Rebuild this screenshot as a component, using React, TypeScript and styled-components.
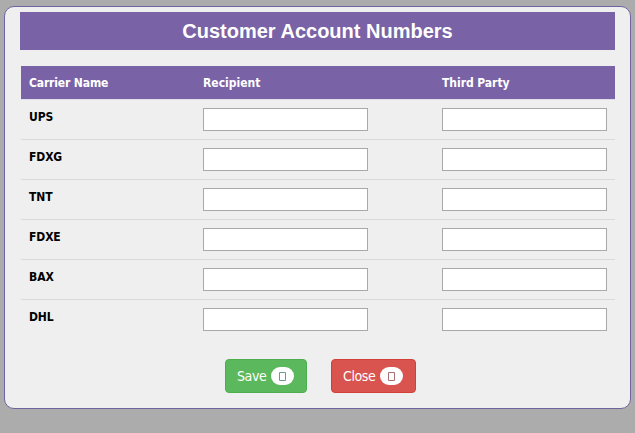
import React from 'react';
import styled, { createGlobalStyle } from 'styled-components';

const GlobalStyle = createGlobalStyle`
  *, *::before, *::after { box-sizing: border-box; }
  html, body { height: 100%; }
  body {
    margin: 0;
    background: #acacac;
    font-family: 'DejaVu Sans Condensed', 'Noto Sans', sans-serif;
    overflow: hidden;
  }
`;

const Dialog = styled.main`
  width: 627px;
  height: 403px;
  margin: 6px 0 0 4px;
  padding: 5px 15px 0;
  border: 1px solid #7064a0;
  border-radius: 10px;
  background: #efefef;
`;

const Title = styled.h1`
  height: 38px;
  margin: 0 0 16px;
  background: #7962a6;
  color: #fff;
  font: bold 20px/38px 'Liberation Sans', Arial, sans-serif;
  text-align: center;
`;

const Table = styled.div`
  margin-left: 1px;
`;

const Row = styled.div`
  display: grid;
  grid-template-columns: 174px 239px 1fr;
  height: 40px;
  padding: 8px 8px 0;
  border-bottom: 1px solid #dadada;
  &:last-child { border-bottom-color: transparent; }
`;

const HeaderRow = styled(Row)`
  height: 34px;
  border-bottom: 1px solid #e0dce9;
  background: #7962a6;
  background-clip: padding-box;
  color: #fff;
`;

const Label = styled.span<{ $spacing?: number }>`
  font: bold 12px/18px 'DejaVu Sans Condensed', 'Noto Sans', sans-serif;
  letter-spacing: ${({ $spacing = -0.1 }) => $spacing}px;
  white-space: nowrap;
`;

const CarrierName = styled(Label)`
  color: #000;
`;

const AccountInput = styled.input`
  width: 165px;
  height: 23px;
  padding: 1px 4px;
  border: 1px solid #a9a9a9;
  border-radius: 0;
  background: #fff;
  outline: none;
`;

const Actions = styled.div`
  display: flex;
  gap: 24px;
  margin: 19px 0 0 205px;
`;

const Button = styled.button<{ $tone: 'save' | 'close' }>`
  display: flex;
  align-items: center;
  justify-content: space-between;
  width: ${({ $tone }) => ($tone === 'save' ? 82 : 85)}px;
  height: 34px;
  padding: 0 12px 0 11px;
  border: 1px solid ${({ $tone }) => ($tone === 'save' ? '#4cae4c' : '#d43f3a')};
  border-radius: 4px;
  background: ${({ $tone }) => ($tone === 'save' ? '#5cb85c' : '#d9534f')};
  color: #fff;
  font: 14px/20px 'DejaVu Sans Condensed', 'Noto Sans', sans-serif;
  letter-spacing: -0.4px;
`;

const Badge = styled.span<{ $tone: 'save' | 'close' }>`
  display: flex;
  align-items: center;
  justify-content: center;
  width: 23px;
  height: 18px;
  border-radius: 9px;
  background: #fff;
  color: ${({ $tone }) => ($tone === 'save' ? '#6a9c8c' : '#a87070')};
`;

const Glyph = styled.svg`
  display: block;
  width: 7px;
  height: 9px;
  margin-top: 1px;
`;

const BoxGlyph = () => (
  <Glyph viewBox="0 0 7 9" fill="none" stroke="currentColor" aria-hidden="true">
    <path d="M.5.5h6v8h-6z" />
  </Glyph>
);

const columns = [
  { title: 'Carrier Name', spacing: -0.14 },
  { title: 'Recipient', spacing: 0 },
  { title: 'Third Party', spacing: -0.04 },
];

const carriers = ['UPS', 'FDXG', 'TNT', 'FDXE', 'BAX', 'DHL'];

export default function App() {
  return (
    <>
      <GlobalStyle />
      <Dialog>
        <Title>Customer Account Numbers</Title>
        <Table>
          <HeaderRow>
            {columns.map(({ title, spacing }) => (
              <Label key={title} $spacing={spacing}>{title}</Label>
            ))}
          </HeaderRow>
          {carriers.map((name) => (
            <Row key={name}>
              <CarrierName>{name}</CarrierName>
              <AccountInput aria-label={`${name} recipient`} />
              <AccountInput aria-label={`${name} third party`} />
            </Row>
          ))}
        </Table>
        <Actions>
          <Button $tone="save">Save <Badge $tone="save"><BoxGlyph /></Badge></Button>
          <Button $tone="close">Close <Badge $tone="close"><BoxGlyph /></Badge></Button>
        </Actions>
      </Dialog>
    </>
  );
}
